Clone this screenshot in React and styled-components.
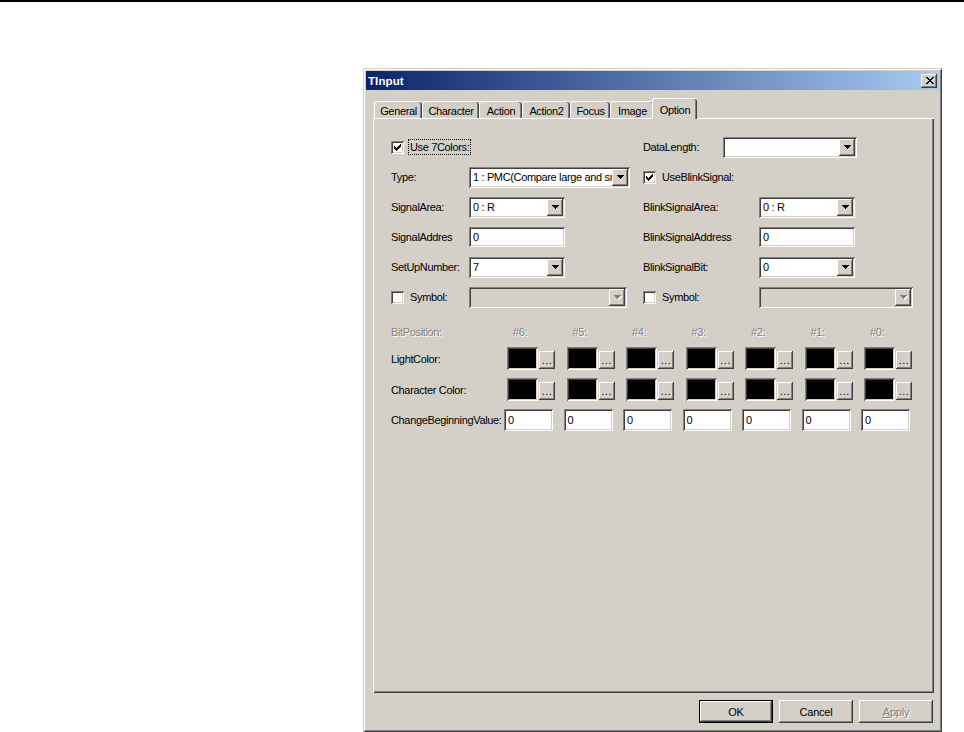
import React from 'react';
import styled, { createGlobalStyle, css } from 'styled-components';

const FACE = '#D4D0C8';
const SHADOW = '#808080';
const DARK = '#404040';
const LIGHT = '#FFFFFF';

const GlobalStyle = createGlobalStyle`
  html, body { margin: 0; padding: 0; background: #fff; }
  body {
    font-family: "Liberation Sans", Arial, sans-serif;
    font-size: 11px;
    color: #000;
    letter-spacing: -0.35px;
  }
  * { box-sizing: border-box; }
`;

const raised = css`
  background: ${FACE};
  box-shadow: inset -1px -1px ${DARK}, inset 1px 1px ${LIGHT}, inset -2px -2px ${SHADOW};
`;

const sunken = css`
  box-shadow: inset 1px 1px ${SHADOW}, inset -1px -1px ${LIGHT}, inset 2px 2px ${DARK}, inset -2px -2px ${FACE};
`;

const disabledText = css`
  color: ${SHADOW};
  text-shadow: 1px 1px 0 ${LIGHT};
`;

const Page = styled.div`
  width: 964px;
  height: 732px;
  border-top: 2px solid #000;
  padding: 66px 0 0 363px;
  overflow: hidden;
`;

const Window = styled.div`
  width: 579px;
  height: 664px;
  background: ${FACE};
  padding: 3px;
  display: flex;
  flex-direction: column;
  box-shadow: inset 1px 1px ${FACE}, inset -1px -1px ${DARK}, inset 2px 2px ${LIGHT}, inset -2px -2px ${SHADOW};
`;

const TitleBar = styled.div`
  height: 19px;
  flex: none;
  display: flex;
  align-items: center;
  justify-content: space-between;
  padding: 0 2px 0 2px;
  background: linear-gradient(to right, #0A246A, #A6CAF0);
`;

const Title = styled.span`
  color: #fff;
  font-weight: bold;
  font-size: 11.5px;
  letter-spacing: 0.1px;
`;

const CloseButton = styled.span`
  width: 16px;
  height: 14px;
  ${raised};
  display: flex;
  align-items: center;
  justify-content: center;
  padding-left: 1px;
  padding-bottom: 1px;
`;

const Body = styled.div`
  flex: 1;
  display: flex;
  flex-direction: column;
  padding: 8px 5px 0 7px;
`;

const TabStrip = styled.div`
  height: 20px;
  flex: none;
  display: flex;
  align-items: flex-end;
  padding-left: 1px;
  position: relative;
  z-index: 1;
`;

const Tab = styled.div`
  width: ${p => p.$w}px;
  height: ${p => (p.$active ? 21 : 17)}px;
  margin: ${p => (p.$active ? '0 -2px -1px -2px' : '0')};
  padding-top: ${p => (p.$active ? 3 : 1)}px;
  line-height: 16px;
  text-align: center;
  background: ${FACE};
  border-top: 1px solid ${LIGHT};
  border-left: 1px solid ${LIGHT};
  border-radius: 3px 3px 0 0;
  box-shadow: inset -1px 0 ${DARK}, inset -2px 0 ${SHADOW};
  white-space: nowrap;
  position: relative;
  z-index: ${p => (p.$active ? 2 : 1)};
`;

const Panel = styled.div`
  flex: none;
  width: 561px;
  height: 575px;
  background: ${FACE};
  border-top: 1px solid ${LIGHT};
  border-left: 1px solid ${LIGHT};
  box-shadow: inset -1px -1px ${DARK}, inset -2px -2px ${SHADOW};
  padding: 17px 0 0 17px;
`;

const UpperGrid = styled.div`
  display: grid;
  grid-template-columns: 78px 174px 116px 1fr;
  grid-template-rows: repeat(6, 22px);
  row-gap: 8px;
  align-items: center;
`;

const Cell = styled.div`
  grid-column: ${p => p.$col || 'auto'};
  display: flex;
  align-items: center;
  gap: ${p => p.$gap || 0}px;
`;

const Label = styled.span`
  white-space: nowrap;
  width: ${p => (p.$w ? `${p.$w}px` : 'auto')};
  flex: none;
  ${p => p.$disabled && disabledText};
`;

const FocusLabel = styled.span`
  white-space: nowrap;
  outline: 1px dotted #000;
  outline-offset: 1px;
`;

const CheckRow = styled.label`
  display: flex;
  align-items: center;
  gap: 6px;
  white-space: nowrap;
`;

const CheckBoxBox = styled.span`
  width: 13px;
  height: 13px;
  flex: none;
  background: #fff;
  display: flex;
  align-items: center;
  justify-content: center;
  ${sunken};
`;

const Field = styled.div`
  width: ${p => p.$w}px;
  height: ${p => p.$h || 21}px;
  flex: none;
  display: flex;
  align-items: center;
  padding: 2px;
  background: ${p => (p.$disabled ? FACE : '#fff')};
  ${sunken};
`;

const FieldText = styled.span`
  flex: 1;
  min-width: 0;
  padding-left: 2px;
  overflow: hidden;
  white-space: nowrap;
`;

const ComboButton = styled.span`
  width: 16px;
  height: 17px;
  flex: none;
  ${raised};
  display: flex;
  align-items: center;
  justify-content: center;
`;

const ArrowSvg = styled.svg`
  display: block;
  fill: ${p => (p.$disabled ? SHADOW : '#000')};
  ${p => p.$disabled && `filter: drop-shadow(1px 1px 0 #fff);`}
`;

const LowerGrid = styled.div`
  margin-top: 17px;
  display: grid;
  grid-template-columns: 113px repeat(7, 59.5px);
  grid-template-rows: 14px 23px 23px 22px;
  row-gap: 8px;
  align-items: center;
`;

const HeaderCell = styled.span`
  padding-left: 9px;
  white-space: nowrap;
  ${disabledText};
`;

const ColorCell = styled.div`
  display: flex;
  align-items: flex-end;
  gap: 1px;
  padding-left: 3px;
  height: 23px;
`;

const Swatch = styled.span`
  width: 31px;
  height: 23px;
  flex: none;
  background: #000;
  box-shadow: inset 1px 1px ${SHADOW}, inset -1px -1px ${LIGHT}, inset 2px 2px ${DARK}, inset -2px -2px ${FACE};
`;

const DotsButton = styled.span`
  width: 16px;
  height: 18px;
  flex: none;
  margin-bottom: 1px;
  ${raised};
  display: flex;
  align-items: flex-end;
  justify-content: center;
  line-height: 13px;
  font-size: 11px;
  letter-spacing: 0.5px;
  padding-bottom: 2px;
`;

const ButtonRow = styled.div`
  display: flex;
  justify-content: flex-end;
  gap: 6px;
  margin-top: 7px;
  padding-right: 1px;
`;

const DialogButton = styled.button`
  width: 74px;
  height: 23px;
  padding: 0;
  margin: 0;
  font-family: inherit;
  font-size: 11px;
  letter-spacing: -0.2px;
  color: #000;
  border: ${p => (p.$default ? '1px solid #000' : 'none')};
  ${raised};
  ${p => p.$disabled && disabledText};
  u { text-decoration: underline; }
`;

const Arrow = ({ disabled }) => (
  <ArrowSvg width="7" height="4" viewBox="0 0 7 4" shapeRendering="crispEdges" $disabled={disabled}>
    <path d="M0 0h7v1H0z M1 1h5v1H1z M2 2h3v1H2z M3 3h1v1H3z" />
  </ArrowSvg>
);

const Combo = ({ w, value, disabled }) => (
  <Field $w={w} $disabled={disabled}>
    <FieldText>{value}</FieldText>
    <ComboButton>
      <Arrow disabled={disabled} />
    </ComboButton>
  </Field>
);

const Edit = ({ w, h, value }) => (
  <Field $w={w} $h={h}>
    <FieldText>{value}</FieldText>
  </Field>
);

const Check = ({ checked }) => (
  <CheckBoxBox>
    {checked && (
      <svg width="7" height="7" viewBox="0 0 7 7" shapeRendering="crispEdges">
        <path
          d="M6 0h1v1H6z M5 1h2v1H5z M0 2h1v1H0z M4 2h3v1H4z M0 3h2v1H0z M3 3h3v1H3z M0 4h5v1H0z M1 5h3v1H1z M2 6h1v1H2z"
          fill="#000"
        />
      </svg>
    )}
  </CheckBoxBox>
);

const tabs = [
  ['General', 48],
  ['Character', 57],
  ['Action', 43],
  ['Action2', 48],
  ['Focus', 40],
  ['Image', 44],
  ['Option', 45],
];

const bits = ['#6:', '#5:', '#4:', '#3:', '#2:', '#1:', '#0:'];

export default function App() {
  return (
    <>
      <GlobalStyle />
      <Page>
        <Window>
          <TitleBar>
            <Title>TInput</Title>
            <CloseButton>
              <svg width="8" height="7" viewBox="0 0 8 7" shapeRendering="crispEdges">
                <path
                  d="M0 0h2v1H0z M6 0h2v1H6z M1 1h2v1H1z M5 1h2v1H5z M2 2h4v1H2z M3 3h2v1H3z M2 4h4v1H2z M1 5h2v1H1z M5 5h2v1H5z M0 6h2v1H0z M6 6h2v1H6z"
                  fill="#000"
                />
              </svg>
            </CloseButton>
          </TitleBar>
          <Body>
            <TabStrip>
              {tabs.map(([name, w]) => (
                <Tab key={name} $w={w} $active={name === 'Option'}>
                  {name}
                </Tab>
              ))}
            </TabStrip>
            <Panel>
              <UpperGrid>
                <Cell $col="1 / 3">
                  <CheckRow>
                    <Check checked />
                    <FocusLabel>Use 7Colors:</FocusLabel>
                  </CheckRow>
                </Cell>
                <Cell $col="3 / 5">
                  <Label $w={80}>DataLength:</Label>
                  <Combo w={134} value="" />
                </Cell>

                <Label>Type:</Label>
                <Cell>
                  <Combo w={161} value="1 : PMC(Compare large and small)" />
                </Cell>
                <Cell $col="3 / 5">
                  <CheckRow>
                    <Check checked />
                    <span>UseBlinkSignal:</span>
                  </CheckRow>
                </Cell>

                <Label>SignalArea:</Label>
                <Cell>
                  <Combo w={96} value="0 : R" />
                </Cell>
                <Label>BlinkSignalArea:</Label>
                <Cell>
                  <Combo w={96} value="0 : R" />
                </Cell>

                <Label>SignalAddres</Label>
                <Cell>
                  <Edit w={96} h={20} value="0" />
                </Cell>
                <Label>BlinkSignalAddress</Label>
                <Cell>
                  <Edit w={96} h={20} value="0" />
                </Cell>

                <Label>SetUpNumber:</Label>
                <Cell>
                  <Combo w={96} value="7" />
                </Cell>
                <Label>BlinkSignalBit:</Label>
                <Cell>
                  <Combo w={96} value="0" />
                </Cell>

                <CheckRow>
                  <Check />
                  <span>Symbol:</span>
                </CheckRow>
                <Cell>
                  <Combo w={158} value="" disabled />
                </Cell>
                <CheckRow>
                  <Check />
                  <span>Symbol:</span>
                </CheckRow>
                <Cell>
                  <Combo w={154} value="" disabled />
                </Cell>
              </UpperGrid>

              <LowerGrid>
                <Label $disabled>BitPosition:</Label>
                {bits.map(b => (
                  <HeaderCell key={b}>{b}</HeaderCell>
                ))}

                <Label>LightColor:</Label>
                {bits.map(b => (
                  <ColorCell key={b}>
                    <Swatch />
                    <DotsButton>...</DotsButton>
                  </ColorCell>
                ))}

                <Label>Character Color:</Label>
                {bits.map(b => (
                  <ColorCell key={b}>
                    <Swatch />
                    <DotsButton>...</DotsButton>
                  </ColorCell>
                ))}

                <Label>ChangeBeginningValue:</Label>
                {bits.map(b => (
                  <Cell key={b}>
                    <Edit w={49} h={22} value="0" />
                  </Cell>
                ))}
              </LowerGrid>
            </Panel>
            <ButtonRow>
              <DialogButton $default>OK</DialogButton>
              <DialogButton>Cancel</DialogButton>
              <DialogButton $disabled>
                <u>A</u>pply
              </DialogButton>
            </ButtonRow>
          </Body>
        </Window>
      </Page>
    </>
  );
}
